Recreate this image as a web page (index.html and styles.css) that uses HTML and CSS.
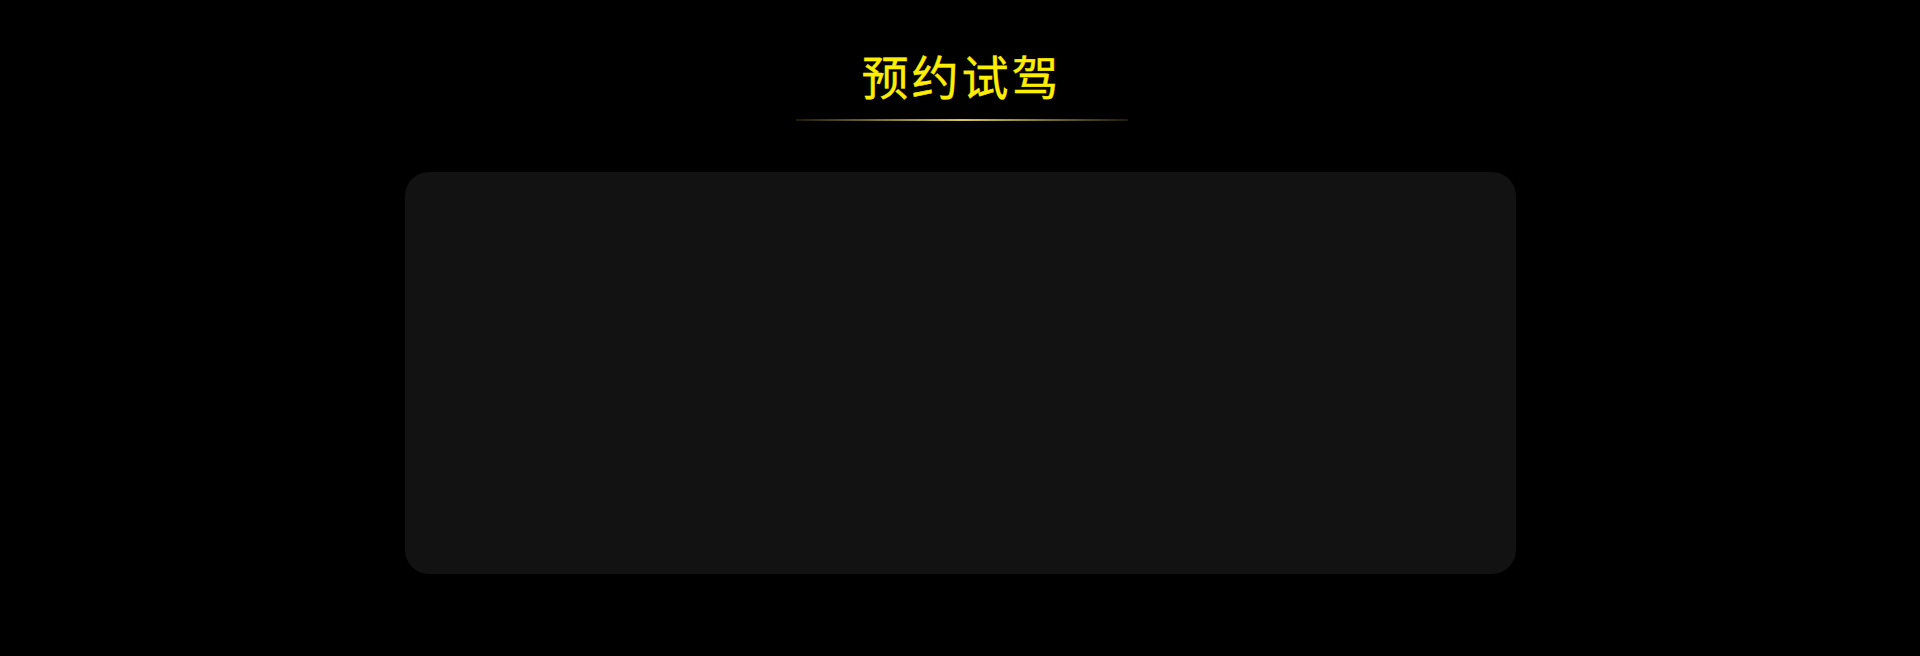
FILE: index.html
```html
<!DOCTYPE html>
<html lang="zh">
<head>
<meta charset="utf-8">
<title>预约试驾</title>
<link rel="stylesheet" href="styles.css">
</head>
<body>
<section class="booking">
  <h2 class="booking-title">预约试驾</h2>
  <div class="booking-divider"></div>
  <div class="booking-card"></div>
</section>
</body>
</html>
```
FILE: styles.css
```css
html, body {
  margin: 0;
  padding: 0;
  background: #000;
}
body {
  width: 1920px;
  height: 656px;
  overflow: hidden;
  font-family: "Noto Sans CJK SC", "Noto Sans", sans-serif;
}
.booking {
  display: flex;
  flex-direction: column;
  align-items: center;
  padding-top: 51px;
}
.booking-title {
  margin: 0;
  padding-left: 3px;
  font-size: 47px;
  line-height: 48px;
  font-weight: 400;
  letter-spacing: 3px;
  color: #ffee00;
  -webkit-text-stroke: 0.4px #ffee00;
}
.booking-divider {
  margin-top: 20px;
  margin-left: 4px;
  width: 332px;
  height: 2px;
  background: linear-gradient(90deg, rgba(200,180,60,0.15) 0%, #d9c75a 50%, rgba(200,180,60,0.15) 100%);
}
.booking-card {
  margin-top: 51px;
  width: 1111px;
  height: 402px;
  background: #121212;
  border-radius: 24px;
}
```
